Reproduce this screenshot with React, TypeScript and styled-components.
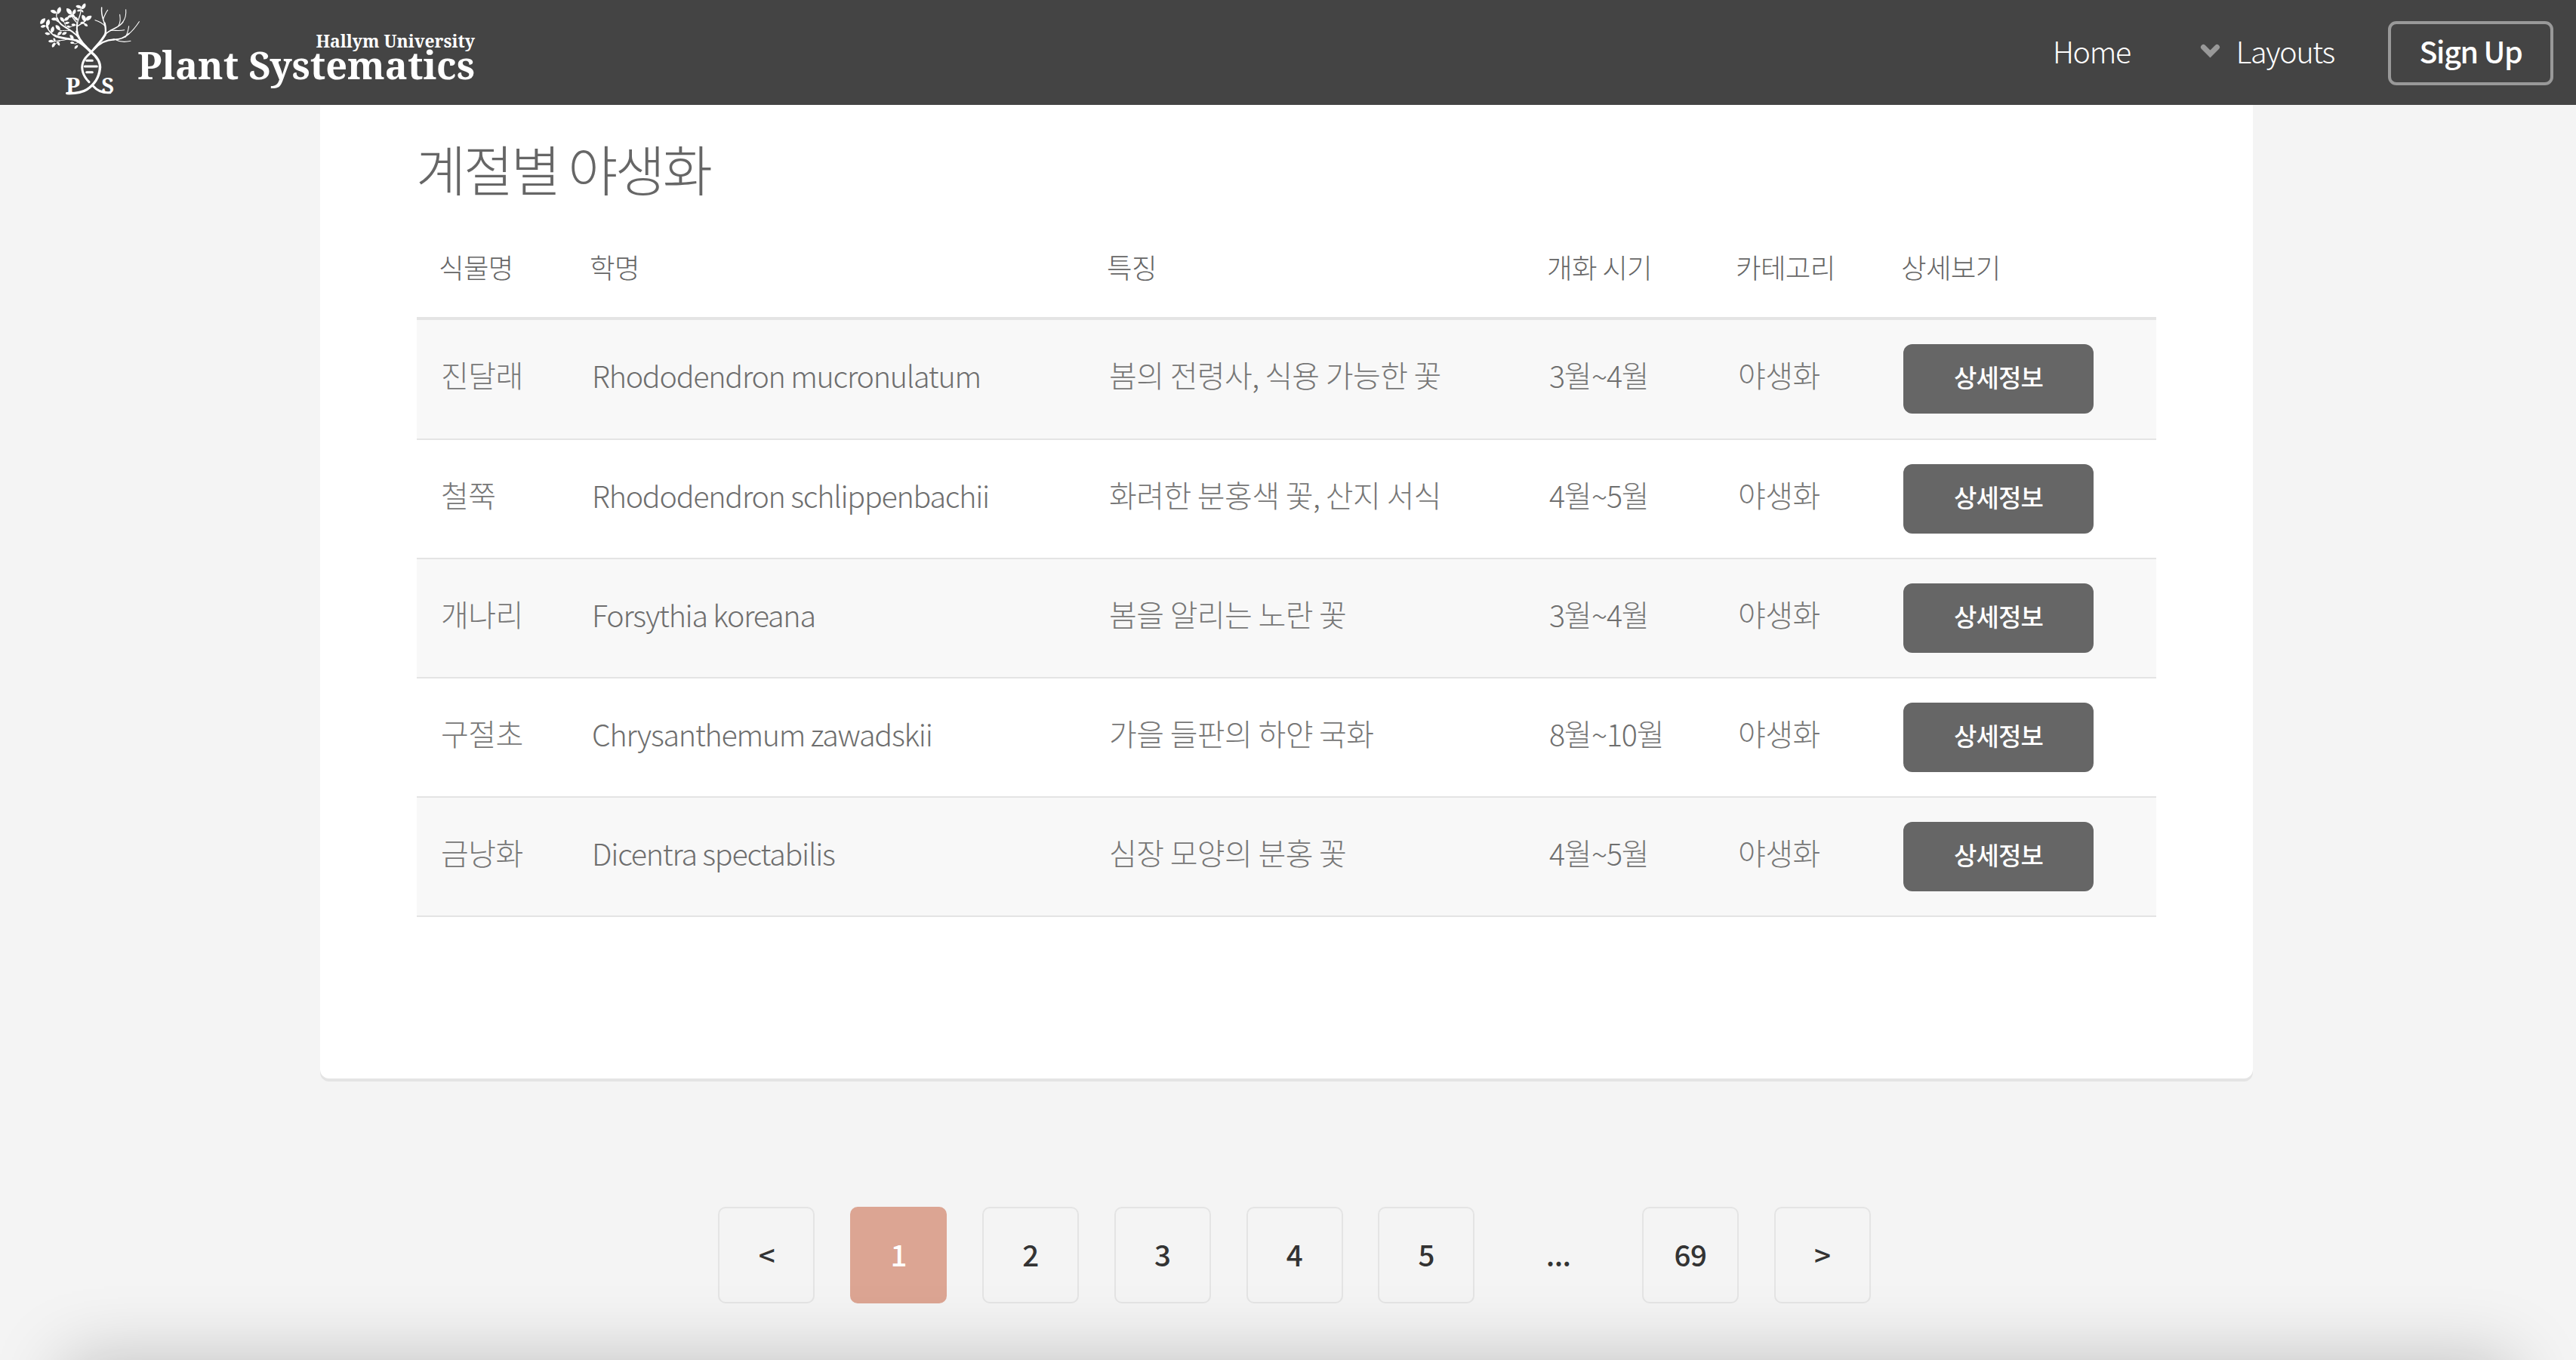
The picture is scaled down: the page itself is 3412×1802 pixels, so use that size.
import React from "react";
import styled, { createGlobalStyle } from "styled-components";

const GlobalStyle = createGlobalStyle`
  * { box-sizing: border-box; }
  html, body { margin: 0; padding: 0; background: #f4f4f4; }
  body {
    font-family: "Noto Sans CJK KR", "Noto Sans", sans-serif;
    font-weight: 300;
    color: #777;
    overflow: hidden;
  }
`;

const Page = styled.div`
  position: relative;
  height: 1802px;
  overflow: hidden;
  background: #f4f4f4;
`;

const Header = styled.header`
  display: flex;
  justify-content: space-between;
  height: 139px;
  padding: 0 30px 0 40px;
  background: #444;
  color: #fff;
`;

const Brand = styled.a`
  display: flex;
  align-items: flex-start;
`;

const BrandMark = styled.svg`
  display: block;
  width: 142px;
  height: 135px;
`;

const BrandText = styled.div`
  display: flex;
  flex-direction: column;
  align-items: flex-end;
  padding-top: 43px;
  font-family: "Noto Serif", "Liberation Serif", serif;
  font-weight: 700;
  white-space: nowrap;
`;

const BrandSub = styled.span`
  font-size: 22.8px;
  line-height: 24px;
`;

const BrandName = styled.span`
  font-size: 50.4px;
  line-height: 38px;
`;

const Nav = styled.nav`
  display: flex;
  align-items: flex-start;
  padding-top: 28px;
`;

const NavLink = styled.a`
  display: flex;
  align-items: center;
  height: 85px;
  padding-bottom: 8px;
  font-size: 39.4px;
  line-height: 60px;
  letter-spacing: -1.3px;
`;

const NavMenu = styled(NavLink)`
  margin: 0 71px 0 92px;
`;

const Chevron = styled.svg`
  width: 27px;
  height: 19px;
  margin: 2px 21px 0 0;
`;

const SignUp = styled(NavLink)`
  justify-content: center;
  width: 219px;
  border: 4px solid #999;
  border-radius: 11px;
  font-weight: 500;
`;

const Card = styled.main`
  width: 2560px;
  height: 1290px;
  margin-left: 424px;
  padding: 33px 128px 0;
  background: #fff;
  border-radius: 0 0 12px 12px;
  box-shadow: 0 4px 0 #e4e4e4;
`;

const Title = styled.h2`
  margin: 0 0 0 -1px;
  font-size: 72px;
  font-weight: 300;
  line-height: 100px;
  letter-spacing: -3.4px;
  color: #666;
`;

const Table = styled.table`
  width: 2304px;
  table-layout: fixed;
  border-collapse: separate;
  border-spacing: 0;
`;

const Col = styled.col<{ $w: number }>`
  width: ${(p) => p.$w}px;
`;

const Th = styled.th`
  height: 152px;
  padding: 55px 0 0 29px;
  border-bottom: 4px solid #e4e4e4;
  text-align: left;
  vertical-align: top;
  font-size: 36.5px;
  font-weight: 300;
  line-height: 54px;
  letter-spacing: -0.7px;
  color: #666;
  white-space: nowrap;
`;

const Td = styled.td<{ $action?: boolean }>`
  height: 158px;
  padding: ${(p) => (p.$action ? "32px 0 0 32px" : "42px 0 0 32px")};
  border-bottom: 2px solid #e4e4e4;
  vertical-align: top;
  font-size: 40px;
  line-height: 60px;
  letter-spacing: -0.6px;
  white-space: nowrap;
`;

const Row = styled.tr`
  &:nth-child(odd) { background: #f8f8f8; }
  &:first-child ${Td} { height: 159px; }
`;

const Latin = styled.span`
  color: #6e6e6e;
  font-size: 39.4px;
  line-height: 40px;
  letter-spacing: -1.22px;
  vertical-align: -1px;
`;

const DetailButton = styled.button`
  display: flex;
  align-items: center;
  justify-content: center;
  width: 252px;
  height: 92px;
  padding: 0 0 6px;
  border: 0;
  border-radius: 12px;
  background: #666;
  color: #fff;
  font-family: inherit;
  font-size: 33px;
  font-weight: 500;
  line-height: 48px;
  letter-spacing: -0.9px;
`;

const Pagination = styled.div`
  display: flex;
  justify-content: center;
  gap: 46.8px;
  margin-top: 170px;
  padding-left: 17px;
`;

const PageItem = styled.a<{ $kind: "link" | "active" | "gap" }>`
  display: flex;
  align-items: center;
  justify-content: center;
  width: 128px;
  height: 128px;
  padding-bottom: 5px;
  border: 2px solid
    ${(p) => ({ link: "#e4e4e4", active: "#dca593", gap: "transparent" })[p.$kind]};
  border-radius: 10px;
  background: ${(p) => (p.$kind === "active" ? "#dca593" : "transparent")};
  color: ${(p) => (p.$kind === "active" ? "#fff" : "#333")};
  font-size: 38.5px;
  font-weight: 500;
  line-height: 56px;
  letter-spacing: -0.6px;
`;

const BottomShade = styled.div`
  position: absolute;
  top: 1802px;
  left: 85px;
  right: 85px;
  height: 300px;
  box-shadow: 0 0 90px rgba(0, 0, 0, 0.22);
`;

const leaves: [number, number, number, number][] = [
  [50, 84, -50, 11], [70, 91, 105, 11], [52, 105, -10, 8], [68, 107, 60, 7],
  [88, 118, 105, 10], [69, 134, 10, 8], [110, 110, 50, 10], [117, 133, -40, 8],
  [136, 133, -25, 8], [93, 47, 20, 10], [114, 42, 110, 11], [96, 76, 0, 9],
  [127, 78, 50, 9], [145, 75, -35, 9], [147, 91, -10, 7], [155, 46, 50, 12],
  [174, 48, 115, 9], [159, 65, -10, 8], [171, 63, 40, 7], [182, 74, 40, 8],
  [193, 27, 15, 9], [212, 25, 120, 10], [194, 42, -10, 6], [207, 44, 50, 5],
  [213, 73, 65, 11], [232, 72, -35, 11], [208, 91, 0, 7], [221, 99, 35, 7],
  [153, 106, 20, 6], [173, 99, 10, 7], [83, 164, 0, 8], [96, 158, 65, 6],
  [93, 179, -60, 8], [112, 173, 60, 7], [165, 147, 45, 8], [167, 170, 0, 6],
  [183, 187, -45, 7],
];

function TreeLogo() {
  return (
    <BrandMark viewBox="0 0 426 405" overflow="visible" aria-label="Plant Systematics">
      <g fill="none" stroke="#fff" strokeLinecap="round" strokeLinejoin="round">
        <path strokeWidth="10" d="M186 162 C215 178 228 194 242 207 C268 228 281 248 277 274 C273 308 252 338 225 356 C205 369 180 372 146 371" />
        <path strokeWidth="8" d="M96 140 C118 156 160 150 192 164 C206 171 224 188 238 202" />
        <path strokeWidth="5" d="M66 104 C72 122 84 136 104 146" />
        <path strokeWidth="9" d="M185 125 C188 146 202 166 222 186" />
        <path strokeWidth="6" d="M107 72 C112 92 130 103 152 116 C172 128 190 143 202 162" />
        <path strokeWidth="3.5" d="M105 50 C103 60 104 70 109 80 M90 76 C100 78 105 80 110 86" />
        <path strokeWidth="6" d="M187 92 C184 108 185 122 190 142" />
        <path strokeWidth="4" d="M201 32 C205 56 190 72 186 98 M188 104 C200 96 210 92 220 82 M165 58 C167 72 178 82 184 88" />
        <path strokeWidth="3" d="M132 84 C138 92 138 100 146 110 M118 122 C130 122 144 120 156 122 M92 166 C112 158 130 164 150 155 M100 176 C104 168 110 164 118 163 M166 152 C172 162 180 164 192 166 M170 172 C178 174 182 176 190 168 M150 106 C160 108 166 104 174 102" />
        <path strokeWidth="9" d="M238 212 C211 234 201 258 209 286 C214 304 224 316 234 326" />
        <path strokeWidth="9" d="M250 342 C264 358 286 371 318 368" />
        <path strokeWidth="9" d="M247 202 C262 182 282 166 298 137" />
        <path strokeWidth="7" d="M298 138 C302 118 299 104 296 92 M254 196 C276 170 300 158 334 157" />
        <path strokeWidth="4.5" d="M296 96 C290 74 281 62 284 30 M301 134 C322 114 352 112 368 88" />
        <path strokeWidth="5.5" d="M330 157 C358 158 376 150 392 134" />
        <path strokeWidth="3.2" d="M368 88 C378 74 382 58 380 38 M291 74 C296 60 300 50 308 40 M297 104 C286 90 272 84 258 80 M350 104 C360 88 358 74 356 58 M318 121 C338 120 356 124 374 119 M388 138 C406 124 420 106 433 86 M378 148 C388 132 390 118 392 104 M340 158 C358 168 378 168 399 163" />
        <path strokeWidth="9" d="M224 241 H247 M217 264 H265 M224 287 H247" />
      </g>
      <g fill="#fff">
        {leaves.map(([x, y, r, s], i) => (
          <path
            key={i}
            transform={`translate(${x} ${y}) rotate(${r}) scale(${s / 8.8})`}
            d="M-12 0 C-7 -8 5 -9 12 0 C5 8 -7 7 -12 0 Z"
          />
        ))}
        <text x="141" y="372" fontFamily='"Noto Serif", serif' fontWeight="700" fontSize="89">P</text>
        <text x="283" y="371" fontFamily='"Noto Serif", serif' fontWeight="700" fontSize="87">S</text>
      </g>
    </BrandMark>
  );
}

/* Latin letters and digits use their own size and tighter tracking than Hangul. */
function Mixed({ text }: { text: string }) {
  return (
    <>
      {text.split(/([\x21-\x7e]+(?: [\x21-\x7e]+)*)/).map((run, i) =>
        i % 2 ? <Latin key={i}>{run}</Latin> : run
      )}
    </>
  );
}

const columns = [200, 685, 583, 250, 219, 367];
const headings = ["식물명", "학명", "특징", "개화 시기", "카테고리", "상세보기"];
const plants = [
  ["진달래", "Rhododendron mucronulatum", "봄의 전령사, 식용 가능한 꽃", "3월~4월", "야생화"],
  ["철쭉", "Rhododendron schlippenbachii", "화려한 분홍색 꽃, 산지 서식", "4월~5월", "야생화"],
  ["개나리", "Forsythia koreana", "봄을 알리는 노란 꽃", "3월~4월", "야생화"],
  ["구절초", "Chrysanthemum zawadskii", "가을 들판의 하얀 국화", "8월~10월", "야생화"],
  ["금낭화", "Dicentra spectabilis", "심장 모양의 분홍 꽃", "4월~5월", "야생화"],
];
const pages = ["<", "1", "2", "3", "4", "5", "...", "69", ">"];

export default function App() {
  return (
    <Page>
      <GlobalStyle />
      <Header>
        <Brand>
          <TreeLogo />
          <BrandText>
            <BrandSub>Hallym University</BrandSub>
            <BrandName>Plant Systematics</BrandName>
          </BrandText>
        </Brand>
        <Nav>
          <NavLink>Home</NavLink>
          <NavMenu>
            <Chevron viewBox="0 0 27 19">
              <path d="M4.5 4.5 L13.5 13.5 L22.5 4.5" fill="none" stroke="#999" strokeWidth="7" strokeLinecap="round" />
            </Chevron>
            Layouts
          </NavMenu>
          <SignUp>Sign Up</SignUp>
        </Nav>
      </Header>
      <Card>
        <Title>계절별 야생화</Title>
        <Table>
          <colgroup>
            {columns.map((w, i) => <Col key={i} $w={w} />)}
          </colgroup>
          <thead>
            <tr>{headings.map((h) => <Th key={h}>{h}</Th>)}</tr>
          </thead>
          <tbody>
            {plants.map((plant) => (
              <Row key={plant[0]}>
                {plant.map((value, i) => (
                  <Td key={i}><Mixed text={value} /></Td>
                ))}
                <Td $action>
                  <DetailButton>상세정보</DetailButton>
                </Td>
              </Row>
            ))}
          </tbody>
        </Table>
      </Card>
      <Pagination>
        {pages.map((p) => (
          <PageItem key={p} $kind={p === "1" ? "active" : p === "..." ? "gap" : "link"}>{p}</PageItem>
        ))}
      </Pagination>
      <BottomShade />
    </Page>
  );
}
